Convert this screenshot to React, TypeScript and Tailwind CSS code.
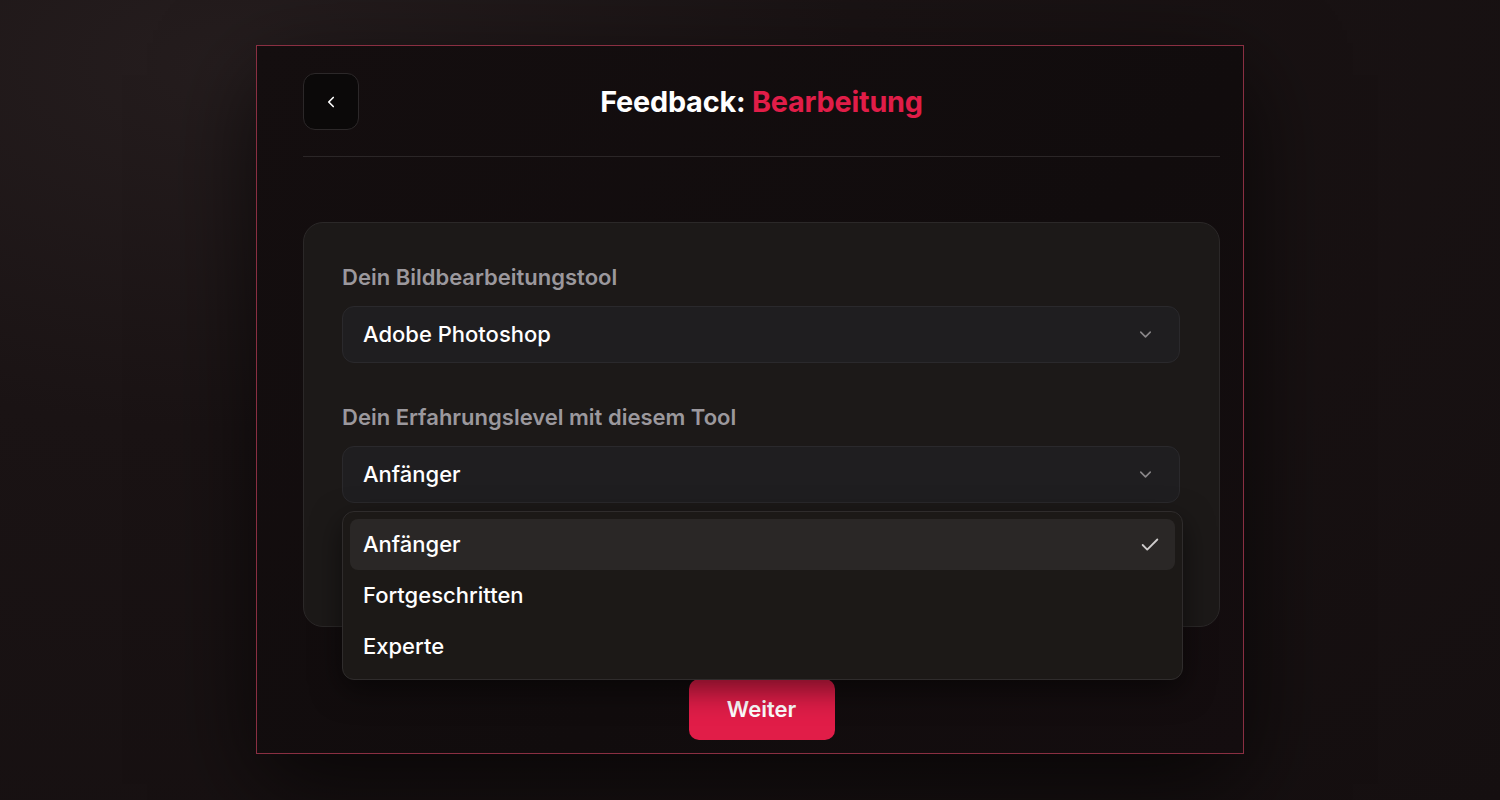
import React from "react";
import { ChevronDown, ChevronLeft, Check } from "lucide-react";

export default function App() {
  return (
    <div
      className="w-[1500px] h-[800px] overflow-hidden flex justify-center pt-[45px] bg-[#1a1314] bg-[radial-gradient(ellipse_at_15%_8%,#251d1e_0%,#1a1314_35%,#150f10_100%)]"
      style={{ fontFamily: "Inter, 'Noto Sans', sans-serif" }}
    >
      <div className="relative w-[988px] h-[709px] border border-[#8a2f42] bg-[#120d0e] bg-[linear-gradient(135deg,#140e0f_0%,#110c0d_60%,#140d0f_100%)] shadow-[0_30px_90px_rgba(0,0,0,0.65)] pl-[46px] pr-[23px] pt-[27px] flex flex-col">
        <div className="flex items-center">
          <button className="w-[56px] h-[57px] rounded-[12px] border border-[#2c2829] bg-[#0b0909] flex items-center justify-center text-white">
            <ChevronLeft size={18} strokeWidth={2.2} />
          </button>
          <h1 className="flex-1 text-center text-[28.8px] font-bold tracking-[-0.2px] text-white">
            Feedback: <span className="text-[#e11d48]">Bearbeitung</span>
          </h1>
          <div className="w-[56px]" />
        </div>
        <div className="mt-[26px] border-t border-[#2b2627]" />

        <div className="relative mt-[65px] h-[405px] rounded-[20px] border border-[#2b2828] bg-[#1c1918] pl-[38px] pr-[39px] pt-[42px]">
          <div className="text-[22px] font-semibold text-[#9b989d] leading-[24px]">Dein Bildbearbeitungstool</div>
          <div className="mt-[17px] h-[57px] rounded-[12px] border border-[#2a292c] bg-[#1f1e20] flex items-center justify-between pl-[20px] pr-[24px]">
            <span className="text-[22px] font-medium text-white">Adobe Photoshop</span>
            <ChevronDown size={19} className="text-[#8a8789]" />
          </div>

          <div className="mt-[42px] text-[22px] font-semibold text-[#9b989d] leading-[24px]">Dein Erfahrungslevel mit diesem Tool</div>
          <div className="relative mt-[17px]">
            <div className="h-[57px] rounded-[12px] border border-[#2a292c] bg-[#1f1e20] flex items-center justify-between pl-[20px] pr-[24px]">
              <span className="text-[22px] font-medium text-white">Anfänger</span>
              <ChevronDown size={19} className="text-[#8a8789]" />
            </div>
            <div className="absolute left-0 top-[65px] w-[841px] z-10 rounded-[12px] border border-[#2f2c2c] bg-[#1c1917] p-[7px] shadow-[0_10px_30px_rgba(0,0,0,0.5)]">
              <div className="h-[51px] rounded-[8px] bg-[#2a2726] flex items-center justify-between pl-[13px] pr-[14px]">
                <span className="text-[22px] font-medium text-white">Anfänger</span>
                <Check size={22} strokeWidth={2} className="text-[#cfcccc]" />
              </div>
              <div className="h-[51px] flex items-center pl-[13px]">
                <span className="text-[22px] font-medium text-white">Fortgeschritten</span>
              </div>
              <div className="h-[51px] flex items-center pl-[13px]">
                <span className="text-[22px] font-medium text-white">Experte</span>
              </div>
            </div>
          </div>
        </div>

        <div className="flex justify-center mt-[52px]">
          <button className="w-[146px] h-[61px] rounded-[10px] bg-[#e11d48] text-white text-[22px] font-semibold">
            Weiter
          </button>
        </div>
      </div>
    </div>
  );
}
